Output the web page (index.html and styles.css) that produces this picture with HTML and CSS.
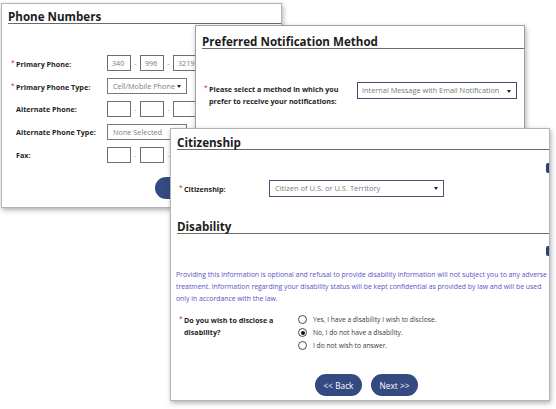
FILE: index.html
```html
<!DOCTYPE html>
<html lang="en">
<head>
<meta charset="utf-8">
<title>Forms</title>
<link rel="stylesheet" href="styles.css">
</head>
<body>
<section class="win win-phone">
  <h2 class="title">Phone Numbers</h2>
  <div class="phone-grid">
    <span class="lbl req">Primary Phone:</span>
    <div class="phone"><span class="box">340</span><span class="dash">-</span><span class="box">996</span><span class="dash">-</span><span class="box box-wide">3219</span></div>
    <span class="lbl req">Primary Phone Type:</span>
    <div class="select sel-phone">Cell/Mobile Phone</div>
    <span class="lbl">Alternate Phone:</span>
    <div class="phone"><span class="box"></span><span class="dash">-</span><span class="box"></span><span class="dash">-</span><span class="box box-wide"></span></div>
    <span class="lbl">Alternate Phone Type:</span>
    <div class="select sel-phone">None Selected</div>
    <span class="lbl">Fax:</span>
    <div class="phone"><span class="box"></span><span class="dash">-</span><span class="box"></span><span class="dash">-</span><span class="box box-wide"></span></div>
  </div>
  <div class="btn-row btn-row-phone"><span class="btn btn-hidden"></span></div>
</section>

<section class="win win-notify">
  <h2 class="title">Preferred Notification Method</h2>
  <div class="notify-row">
    <span class="lbl req">Please select a method in which you<br>prefer to receive your notifications:</span>
    <div class="select sel-notify">Internal Message with Email Notification</div>
  </div>
</section>

<section class="win win-citizen">
  <h2 class="title">Citizenship</h2>
  <div class="cit-row">
    <span class="lbl req">Citizenship:</span>
    <div class="select sel-cit">Citizen of U.S. or U.S. Territory</div>
  </div>
  <h2 class="title title-dis">Disability</h2>
  <p class="info">Providing this information is optional and refusal to provide disability information will not subject you to any adverse<br>treatment. Information regarding your disability status will be kept confidential as provided by law and will be used<br>only in accordance with the law.</p>
  <div class="q-row">
    <span class="lbl req">Do you wish to disclose a<br>disability?</span>
    <div class="radios">
      <div class="radio"><span class="dot"></span>Yes, I have a disability I wish to disclose.</div>
      <div class="radio"><span class="dot on"></span>No, I do not have a disability.</div>
      <div class="radio"><span class="dot"></span>I do not wish to answer.</div>
    </div>
  </div>
  <div class="btn-row btn-row-cit"><span class="btn">&lt;&lt; Back</span><span class="btn">Next &gt;&gt;</span></div>
  <span class="help help-1"></span>
  <span class="help help-2"></span>
</section>
</body>
</html>
```
FILE: styles.css
```css
* { box-sizing: border-box; margin: 0; padding: 0; }
html, body { width: 556px; height: 409px; background: #fff; overflow: hidden; }
body { position: relative; font-family: "Open Sans", "Liberation Sans", sans-serif; color: #222; }

.win {
  position: absolute;
  background: #fff;
  border: 1px solid #b4b4b4;
  box-shadow: 1px 2px 5px rgba(0, 0, 0, 0.32);
  overflow: hidden;
}
.win-phone { left: 1px; top: 3px; width: 281px; height: 205px; padding-left: 6px; z-index: 1; }
.win-notify { left: 195px; top: 25px; width: 330px; height: 104px; padding-left: 6px; z-index: 2; border-color: #a0a0a0; }
.win-citizen { left: 170px; top: 128px; width: 380px; height: 273px; padding-left: 6px; z-index: 3; }

.title {
  font-size: 11.6px;
  font-weight: 700;
  line-height: 13px;
  color: #1c1c1c;
  border-bottom: 1px solid #6a6a6a;
}
.win-phone .title { padding-top: 6px; }
.win-notify .title { padding-top: 9px; }
.win-citizen .title { padding-top: 7px; }
.win-citizen .title-dis { margin-top: 16px; }

.lbl {
  font-size: 7.2px;
  font-weight: 700;
  line-height: 12px;
  padding-left: 8px;
  color: #1e1e1e;
  white-space: nowrap;
}
.req::before {
  content: "*";
  display: inline-block;
  width: 5px;
  margin-left: -5px;
  color: #c8282d;
  font-weight: 400;
  font-size: 6.5px;
  vertical-align: 1.5px;
}

.phone-grid {
  display: grid;
  grid-template-columns: 99px auto;
  grid-auto-rows: 16px;
  row-gap: 7px;
  align-items: center;
  margin-top: 31px;
}
.phone { display: flex; align-items: center; height: 16px; }
.box {
  width: 24px;
  height: 16px;
  border: 1px solid #6e6e6e;
  font-size: 7.2px;
  line-height: 14px;
  color: #7a7a7a;
  padding-left: 4px;
}
.box-wide { width: 34px; }
.dash { width: 9px; text-align: center; font-size: 7px; color: #999; }

.select {
  position: relative;
  height: 16px;
  border: 1px solid #787878;
  font-size: 7.3px;
  line-height: 14px;
  color: #7c7c7c;
  padding-left: 5px;
  white-space: nowrap;
}
.select::after {
  content: "";
  position: absolute;
  right: 5px;
  top: 6px;
  border-left: 2.5px solid transparent;
  border-right: 2.5px solid transparent;
  border-top: 3px solid #222;
}
.sel-phone { width: 80px; }

.btn-row { display: flex; gap: 9px; }
.btn {
  display: inline-flex;
  align-items: center;
  justify-content: center;
  width: 47px;
  height: 22px;
  border-radius: 11px;
  background: #344a81;
  color: #fff;
  font-size: 8.3px;
}
.btn-row-phone { margin-top: 14px; padding-left: 147px; }

.notify-row { display: flex; align-items: flex-start; margin-top: 33px; }
.notify-row .lbl { width: 155px; padding-left: 7px; line-height: 12.5px; }
.sel-notify { width: 160px; height: 17px; line-height: 15px; padding-left: 4px; border-color: #3e4c6c; color: #777; font-size: 7.35px; }
.sel-notify::after { top: 6.5px; }

.cit-row { display: flex; align-items: center; margin-top: 30px; }
.cit-row .lbl { width: 92px; padding-left: 7px; }
.sel-cit { width: 175px; height: 17px; line-height: 15px; border-color: #4a5672; font-size: 7.5px; }

.info {
  margin-top: 35px;
  margin-left: -1px;
  font-size: 6.85px;
  line-height: 12px;
  color: #5a50c6;
  white-space: nowrap;
}

.q-row { display: flex; margin-top: 8px; }
.q-row .lbl { width: 121px; padding-left: 7px; }
.radios { display: flex; flex-direction: column; }
.radio {
  display: flex;
  align-items: center;
  height: 13px;
  font-size: 6.7px;
  color: #3a3a3a;
  white-space: nowrap;
}
.dot {
  position: relative;
  width: 9px;
  height: 9px;
  border: 1px solid #4a4a4a;
  border-radius: 50%;
  margin-right: 6px;
  flex: none;
}
.dot.on::after {
  content: "";
  position: absolute;
  left: 1.5px;
  top: 1.5px;
  width: 4px;
  height: 4px;
  border-radius: 50%;
  background: #111;
}

.btn-row-cit { margin-top: 22px; padding-left: 138px; }

.help {
  position: absolute;
  left: 375px;
  width: 9px;
  height: 10px;
  border-radius: 2px;
  background: #2e3f72;
}
.help-1 { top: 34px; }
.help-2 { top: 117px; }
```
